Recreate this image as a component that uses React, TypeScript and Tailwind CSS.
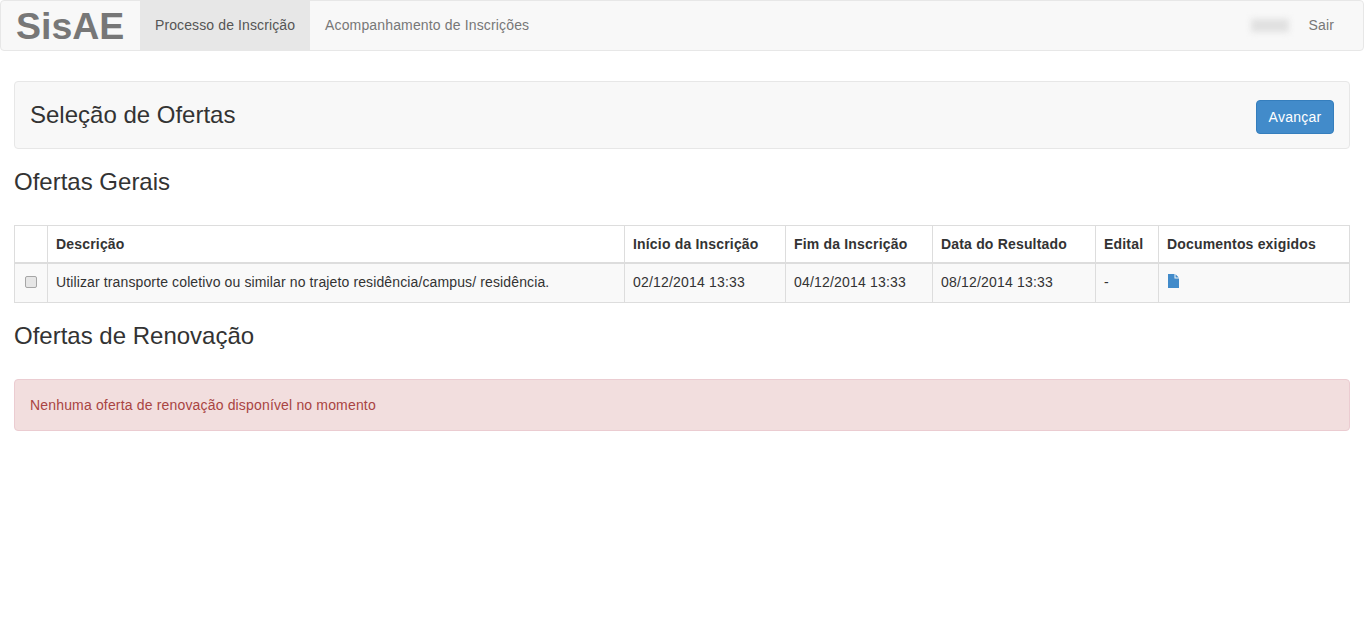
export default function App() {
  const headers = [
    { label: "", width: "w-[33px]" },
    { label: "Descrição", width: "w-[577px]" },
    { label: "Início da Inscrição", width: "w-[161px]" },
    { label: "Fim da Inscrição", width: "w-[147px]" },
    { label: "Data do Resultado", width: "w-[163px]" },
    { label: "Edital", width: "w-[63px]" },
    { label: "Documentos exigidos", width: "w-[191px]" },
  ];

  return (
    <div className="min-h-[623px] bg-white font-['Liberation_Sans',Arial,sans-serif] text-[14px] leading-[20px] tracking-[0.15px] text-[#333]">
      {/* Navbar */}
      <nav className="flex h-[51px] items-stretch rounded-[4px] border border-[#e7e7e7] bg-[#f8f8f8]">
        <a className="w-[139px] pl-[15px] pt-[2px] text-[37.5px] font-bold leading-[46px] tracking-normal text-[#777]">SisAE</a>
        <a className="flex items-center bg-[#e7e7e7] px-[15px] pb-[1px] tracking-[0.11px] text-[#555]">Processo de Inscrição</a>
        <a className="flex items-center px-[15px] pb-[1px] text-[#777]">Acompanhamento de Inscrições</a>
        <div className="ml-auto flex items-center pb-[1px] pr-[14px]">
          <div className="mr-[5px] h-[13px] w-[38px] bg-[#e0e0e0] blur-[3px]" />
          <a className="px-[15px] text-[#777]">Sair</a>
        </div>
      </nav>

      <main className="px-[14px] pt-[30px]">
        {/* Title panel */}
        <div className="flex h-[68px] items-center justify-between rounded-[4px] border border-[#e7e7e7] bg-[#f8f8f8] pl-[15px] pr-[15px]">
          <h1 className="text-[24px] leading-[26px] tracking-normal text-[#333]">Seleção de Ofertas</h1>
          <button type="button" className="mt-[3px] h-[34px] w-[78px] rounded-[4px] border border-[#357ebd] bg-[#428bca] tracking-[0.25px] text-white">
            Avançar
          </button>
        </div>

        <h2 className="mt-[20px] text-[24px] leading-[26px] tracking-normal text-[#333]">Ofertas Gerais</h2>

        {/* Ofertas table */}
        <table className="mt-[30px] w-[1335px] table-fixed border-collapse">
          <thead>
            <tr className="h-[37px]">
              {headers.map((h) => (
                <th key={h.label} className={`${h.width} border border-b-2 border-[#ddd] px-[8px] text-left font-bold tracking-[0.18px]`}>
                  {h.label}
                </th>
              ))}
            </tr>
          </thead>
          <tbody>
            <tr className="h-[40px] bg-[#f9f9f9]">
              <td className="border border-[#ddd] text-center">
                <input type="checkbox" className="mt-[3px] h-[12px] w-[12px] appearance-none rounded-[2px] border border-[#a6a6a6] bg-[#e6e6e6]" />
              </td>
              <td className="border border-[#ddd] px-[8px] pb-[2px] tracking-[0.125px]">
                Utilizar transporte coletivo ou similar no trajeto residência/campus/ residência.
              </td>
              <td className="border border-[#ddd] px-[8px] pb-[2px] tracking-[0.19px]">02/12/2014 13:33</td>
              <td className="border border-[#ddd] px-[8px] pb-[2px] tracking-[0.19px]">04/12/2014 13:33</td>
              <td className="border border-[#ddd] px-[8px] pb-[2px] tracking-[0.19px]">08/12/2014 13:33</td>
              <td className="border border-[#ddd] px-[8px] pb-[2px]">-</td>
              <td className="border border-[#ddd] px-[8px]">
                <svg viewBox="0 0 11 14" className="mb-[4px] ml-[1px] block h-[14px] w-[11px]">
                  <path d="M0 0H6.5V4.5H11V14H0Z M7.5 0.2L10.8 3.5H7.5Z" fill="#428bca" />
                </svg>
              </td>
            </tr>
          </tbody>
        </table>

        <h2 className="mt-[20px] text-[24px] leading-[26px] tracking-normal text-[#333]">Ofertas de Renovação</h2>

        {/* Alert */}
        <div className="mt-[30px] h-[52px] rounded-[4px] border border-[#ebccd1] bg-[#f2dede] px-[15px] py-[15px] tracking-[0.165px] text-[#a94442]">
          Nenhuma oferta de renovação disponível no momento
        </div>
      </main>
    </div>
  );
}
